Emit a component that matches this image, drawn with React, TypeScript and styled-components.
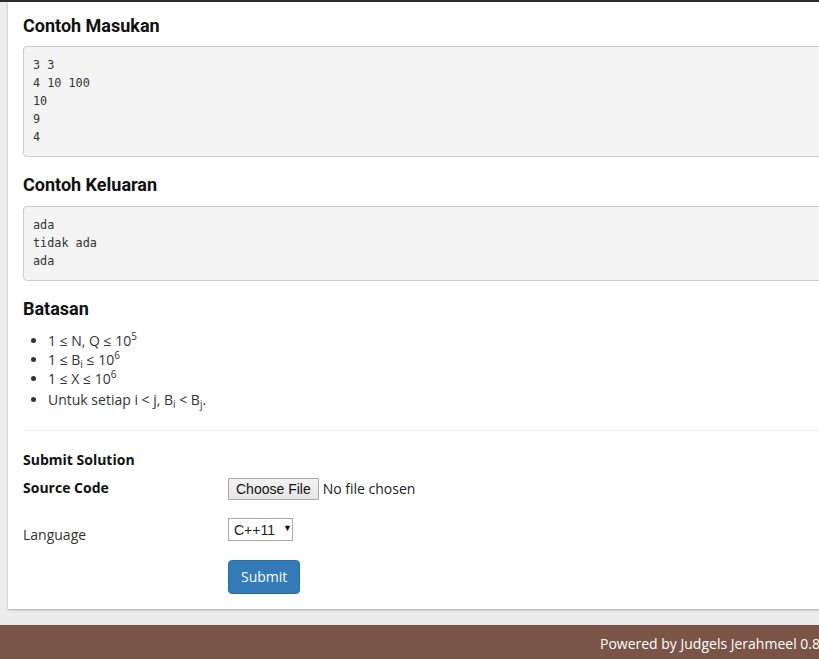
import React from "react";
import styled, { createGlobalStyle } from "styled-components";

const GlobalStyle = createGlobalStyle`
  html, body { margin: 0; padding: 0; }
  body {
    background: #ececec;
    overflow: hidden;
    font-family: "Open Sans", "Liberation Sans", sans-serif;
    font-size: 14px;
    line-height: 20px;
    color: #333;
  }
`;

const Page = styled.div`
  width: 838px;
`;

const TopBar = styled.div`
  height: 2px;
  background: #2c2c2c;
`;

const Main = styled.div`
  padding: 0 0 16px 8px;
`;

const Card = styled.div`
  background: #fff;
  box-shadow: 0 1px 2px rgba(0, 0, 0, 0.28);
  padding: 1px 15px 15px 15px;
`;

const Heading = styled.h3<{ $first?: boolean }>`
  font-family: Roboto, "Liberation Sans", sans-serif;
  font-weight: 700;
  font-size: 18px;
  line-height: 20px;
  color: #111;
  margin: ${(p) => (p.$first ? "13px" : "18px")} 0 ${(p) => (p.$first ? "10px" : "11px")};
`;

const Pre = styled.pre`
  margin: 0;
  background: #f4f4f4;
  border: 1px solid #ccc;
  border-radius: 4px;
  padding: 9px 9px 10px;
  font-family: "DejaVu Sans Mono", "Liberation Mono", monospace;
  font-size: 11.8px;
  line-height: 18px;
  color: #333;
`;

const List = styled.ul`
  margin: 12px 0 0;
  padding-left: 25px;
  color: #333;
`;

const Item = styled.li<{ $extra?: number }>`
  line-height: 19px;
  margin-top: ${(p) => p.$extra ?? 0}px;
`;

const Sup = styled.sup`
  font-size: 10px;
  vertical-align: 6px;
  line-height: 0;
`;

const Sub = styled.sub`
  font-size: 10px;
  vertical-align: -3px;
  line-height: 0;
`;

const Rule = styled.hr`
  border: 0;
  border-top: 1px solid #eee;
  margin: 21px 0 0;
`;

const FormTitle = styled.div`
  font-weight: 700;
  color: #111;
  margin-top: 19px;
`;

const FormRow = styled.div<{ $gap: number }>`
  display: grid;
  grid-template-columns: 205px 1fr;
  align-items: start;
  margin-top: ${(p) => p.$gap}px;
`;

const Label = styled.div<{ $bold?: boolean; $offset?: number }>`
  font-weight: ${(p) => (p.$bold ? 700 : 400)};
  color: ${(p) => (p.$bold ? "#111" : "#333")};
  padding-top: ${(p) => p.$offset ?? 0}px;
`;

const FileControl = styled.div`
  display: flex;
  align-items: center;
  gap: 4px;
`;

const NativeButton = styled.span`
  display: inline-block;
  box-sizing: border-box;
  height: 22px;
  padding: 0 7px;
  border: 1px solid #a6a6a6;
  border-radius: 1px;
  background: linear-gradient(#f2f2f2, #e6e6e6);
  font-family: "Liberation Sans", Arial, sans-serif;
  font-size: 14px;
  line-height: 20px;
  color: #111;
`;

const FileText = styled.span`
  color: #222;
`;

const Select = styled.div`
  display: inline-flex;
  align-items: center;
  box-sizing: border-box;
  width: 65px;
  height: 23px;
  padding: 0 4px 0 5px;
  border: 1px solid #a9a9a9;
  background: #fff;
  font-family: "Liberation Sans", Arial, sans-serif;
  font-size: 14px;
  color: #222;
  gap: 8px;
`;

const Arrow = styled.span`
  font-size: 9px;
  color: #111;
  margin-top: -3px;
`;

const SubmitButton = styled.button`
  box-sizing: border-box;
  height: 34px;
  padding: 6px 12px;
  font-family: "Open Sans", sans-serif;
  font-size: 14px;
  line-height: 20px;
  color: #fff;
  background: #337ab7;
  border: 1px solid #2e6da4;
  border-radius: 4px;
  justify-self: start;
`;

const Footer = styled.footer`
  height: 34px;
  background: #7a5547;
  color: #fff;
  display: flex;
  align-items: center;
  justify-content: flex-end;
  padding-right: 18px;
  padding-top: 4px;
  box-sizing: border-box;
`;

export default function App() {
  return (
    <Page>
      <GlobalStyle />
      <TopBar />
      <Main>
        <Card>
          <Heading $first>Contoh Masukan</Heading>
          <Pre>{"3 3\n4 10 100\n10\n9\n4"}</Pre>
          <Heading>Contoh Keluaran</Heading>
          <Pre>{"ada\ntidak ada\nada"}</Pre>
          <Heading>Batasan</Heading>
          <List>
            <Item>
              1 ≤ N, Q ≤ 10<Sup>5</Sup>
            </Item>
            <Item>
              1 ≤ B<Sub>i</Sub> ≤ 10<Sup>6</Sup>
            </Item>
            <Item>
              1 ≤ X ≤ 10<Sup>6</Sup>
            </Item>
            <Item $extra={2}>
              Untuk setiap i &lt; j, B<Sub>i</Sub> &lt; B<Sub>j</Sub>.
            </Item>
          </List>
          <Rule />
          <FormTitle>Submit Solution</FormTitle>
          <FormRow $gap={8}>
            <Label $bold>Source Code</Label>
            <FileControl>
              <NativeButton>Choose File</NativeButton>
              <FileText>No file chosen</FileText>
            </FileControl>
          </FormRow>
          <FormRow $gap={18}>
            <Label $offset={7}>Language</Label>
            <div>
              <Select>
                <span>C++11</span>
                <Arrow>▼</Arrow>
              </Select>
            </div>
          </FormRow>
          <FormRow $gap={15}>
            <span />
            <SubmitButton>Submit</SubmitButton>
          </FormRow>
        </Card>
      </Main>
      <Footer>Powered by Judgels Jerahmeel 0.8</Footer>
    </Page>
  );
}
